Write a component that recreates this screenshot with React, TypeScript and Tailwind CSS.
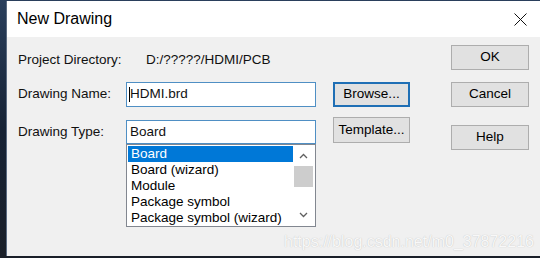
import React from 'react'

const ui = { fontFamily: '"Liberation Sans", Arial, sans-serif' }

function Button({ label, focused = false, className = '' }: { label: string; focused?: boolean; className?: string }) {
  return (
    <div
      className={`flex items-center justify-center bg-[#e1e1e1] text-[13.5px] text-black ${
        focused ? 'border-2 border-[#1f6fb5]' : 'border border-[#adadad]'
      } ${className}`}
    >
      {label}
    </div>
  )
}

const ITEMS = ['Board', 'Board (wizard)', 'Module', 'Package symbol', 'Package symbol (wizard)']

export default function App() {
  return (
    <div className="w-[540px] h-[258px] bg-gradient-to-b from-[#2a3f5c] via-[#162234] to-[#1a1f28] pl-[6px] pt-px pb-[2px] overflow-hidden" style={ui}>
      <div className="relative h-full bg-[#f0f0f0] border-l border-[#5a6a80] flex flex-col">
        {/* Title bar */}
        <div className="h-[36px] bg-white flex items-center justify-between pl-[10px] pr-[12px] shrink-0">
          <span className="text-[16px] text-black">New Drawing</span>
          <svg width="13" height="13" viewBox="0 0 13 13" className="mr-[1px]">
            <path d="M0.5 0.5 L12.5 12.5 M12.5 0.5 L0.5 12.5" stroke="#111" strokeWidth="1" />
          </svg>
        </div>

        {/* Body */}
        <div className="flex pl-[11px] text-[13.5px] text-[#111]">
          {/* Fields */}
          <div className="w-[298px] flex flex-col">
            <div className="mt-[15px] h-[16px] flex items-center">
              <span className="w-[128px]">Project Directory:</span>
              <span>D:/?????/HDMI/PCB</span>
            </div>

            <div className="mt-[14px] flex items-center">
              <span className="w-[108px]">Drawing Name:</span>
              <div className="w-[190px] h-[25px] bg-white border border-[#4f8fc4] flex items-center pl-[2px]">
                <span className="w-px h-[15px] bg-black" />
                <span>HDMI.brd</span>
              </div>
            </div>

            <div className="mt-[13px] flex items-center">
              <span className="w-[108px]">Drawing Type:</span>
              <div className="w-[190px] h-[24px] bg-white border border-[#4f8fc4] flex items-center pl-[3px]">
                Board
              </div>
            </div>

            <div className="ml-[108px] w-[190px] h-[83px] bg-white border border-[#828790] flex p-px">
              <div className="flex-1 flex flex-col">
                {ITEMS.map((item, i) => (
                  <div
                    key={item}
                    className={`h-[16px] leading-[16px] pl-[3px] ${i === 0 ? 'bg-[#0078d7] text-white' : 'text-black'}`}
                  >
                    {item}
                  </div>
                ))}
              </div>
              <div className="w-[21px] flex flex-col items-center">
                <div className="h-[20px] flex items-center justify-center">
                  <svg width="9" height="6" viewBox="0 0 9 6">
                    <path d="M1 5 L4.5 1.5 L8 5" fill="none" stroke="#606060" strokeWidth="1.3" />
                  </svg>
                </div>
                <div className="w-[19px] h-[21px] bg-[#cdcdcd]" />
                <div className="flex-1" />
                <div className="h-[20px] flex items-center justify-center">
                  <svg width="9" height="6" viewBox="0 0 9 6">
                    <path d="M1 1 L4.5 4.5 L8 1" fill="none" stroke="#606060" strokeWidth="1.3" />
                  </svg>
                </div>
              </div>
            </div>
          </div>

          {/* Browse / Template */}
          <div className="ml-[17px] w-[77px] flex flex-col">
            <Button label="Browse..." focused className="mt-[45px] h-[25px]" />
            <Button label="Template..." className="mt-[10px] h-[26px]" />
          </div>

          {/* OK / Cancel / Help */}
          <div className="ml-[41px] w-[78px] flex flex-col">
            <Button label="OK" className="mt-[8px] h-[25px]" />
            <Button label="Cancel" className="mt-[12px] h-[25px]" />
            <Button label="Help" className="mt-[18px] h-[25px]" />
          </div>
        </div>

        {/* Watermark */}
        <span className="absolute left-[277px] top-[229px] text-[16px] text-[#f8f8f8] [text-shadow:0_0_1px_#b8b8b8]">
          https://blog.csdn.net/m0_37872216
        </span>
      </div>
    </div>
  )
}
